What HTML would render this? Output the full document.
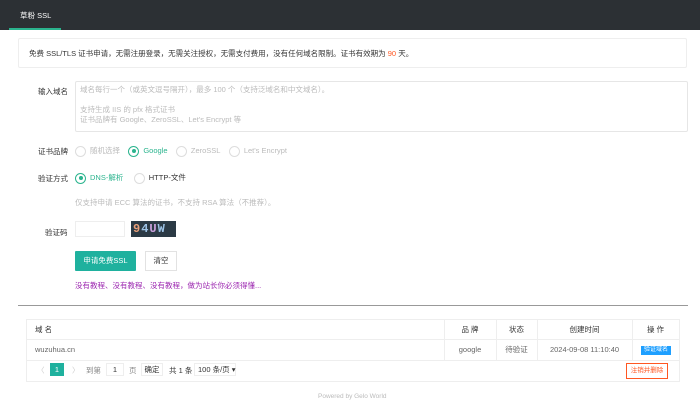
<!DOCTYPE html>
<html><head><meta charset="utf-8"><style>
*{margin:0;padding:0;box-sizing:border-box}
body{width:700px;height:400px;background:#fff;font-family:"Liberation Sans","Noto Sans CJK SC",sans-serif;font-size:7.5px;color:#333;position:relative;overflow:hidden}
.a{position:absolute;white-space:nowrap}
.hd{left:0;top:0;width:700px;height:30px;background:#2c3034}
.rad{display:inline-block;width:11px;height:11px;border:1px solid #ddd;border-radius:50%;vertical-align:middle;margin-right:4px;position:relative}
.rad.on{border-color:#2bb48e}
.rad.on:after{content:"";position:absolute;left:2.5px;top:2.5px;width:4px;height:4px;border-radius:50%;background:#2bb48e}
.g{color:#bbb}
.td{position:absolute;top:0;height:20px;line-height:20px;text-align:center}
</style></head><body>
<div class="a hd"></div>
<div class="a" style="left:20px;top:10px;color:#fff;font-size:7.5px">草粉 SSL</div>
<div class="a" style="left:9px;top:28px;width:52px;height:2px;background:#2bb48e"></div>

<div class="a" style="left:18px;top:38px;width:669px;height:30px;border:1px solid #eee;border-radius:2px;background:#fff"></div>
<div class="a" style="left:29px;top:48px">免费 SSL/TLS 证书申请，无需注册登录，无需关注授权，无需支付费用，没有任何域名限制。证书有效期为 <span style="color:#ff5722">90</span> 天。</div>

<div class="a" style="left:38px;top:86px">输入域名</div>
<div class="a" style="left:75px;top:81px;width:613px;height:51px;border:1px solid #e6e6e6;border-radius:2px"></div>
<div class="a g" style="left:80px;top:85px;line-height:10px">域名每行一个（或英文逗号隔开），最多 100 个（支持泛域名和中文域名）。<br><br>支持生成 IIS 的 pfx 格式证书<br>证书品牌有 Google、ZeroSSL、Let's Encrypt 等</div>

<div class="a" style="left:38px;top:146px">证书品牌</div>
<div class="a" style="left:75px;top:145px;line-height:12px"><span class="rad"></span><span class="g">随机选择</span>&nbsp;&nbsp;&nbsp;&nbsp;<span class="rad on"></span><span style="color:#2bb48e">Google</span>&nbsp;&nbsp;&nbsp;&nbsp;<span class="rad"></span><span class="g">ZeroSSL</span>&nbsp;&nbsp;&nbsp;&nbsp;<span class="rad"></span><span class="g">Let's Encrypt</span></div>

<div class="a" style="left:38px;top:173px">验证方式</div>
<div class="a" style="left:75px;top:172px;line-height:12px"><span class="rad on"></span><span style="color:#2bb48e">DNS-解析</span>&nbsp;&nbsp;&nbsp;&nbsp;&nbsp;<span class="rad"></span>HTTP-文件</div>
<div class="a g" style="left:75px;top:197px">仅支持申请 ECC 算法的证书，不支持 RSA 算法（不推荐）。</div>

<div class="a" style="left:45px;top:227px">验证码</div>
<div class="a" style="left:75px;top:221px;width:50px;height:16px;border:1px solid #eee"></div>
<div class="a" style="left:131px;top:221px;width:45px;height:16px;background:#2b3a45;color:#9dc3e6;font-size:12px;font-weight:bold;line-height:16px;padding-left:2px;letter-spacing:1px;font-family:'Liberation Mono',monospace"><span style="color:#e8a07a">9</span>4<span style="color:#c9a0dc">U</span>W</div>

<div class="a" style="left:75px;top:251px;width:61px;height:20px;background:#1fb19e;color:#fff;line-height:20px;text-align:center;border-radius:1px">申请免费SSL</div>
<div class="a" style="left:145px;top:251px;width:32px;height:20px;border:1px solid #e2e2e2;line-height:18px;text-align:center">清空</div>
<div class="a" style="left:75px;top:280px;color:#9c27b0">没有教程、没有教程、没有教程，做为站长你必须得懂...</div>

<div class="a" style="left:18px;top:305px;width:670px;height:1px;background:#999"></div>

<div class="a" style="left:26px;top:319px;width:654px;height:63px;border:1px solid #eee">
 <div class="a" style="left:0;top:19px;width:652px;height:1px;background:#eee"></div>
 <div class="a" style="left:0;top:40px;width:652px;height:1px;background:#eee"></div>
 <div class="a" style="left:417px;top:0;width:1px;height:40px;background:#eee"></div>
 <div class="a" style="left:469px;top:0;width:1px;height:40px;background:#eee"></div>
 <div class="a" style="left:510px;top:0;width:1px;height:40px;background:#eee"></div>
 <div class="a" style="left:605px;top:0;width:1px;height:40px;background:#eee"></div>
 <div class="td" style="left:8px">域 名</div>
 <div class="td" style="left:417px;width:52px">品 牌</div>
 <div class="td" style="left:469px;width:41px">状态</div>
 <div class="td" style="left:510px;width:95px">创建时间</div>
 <div class="td" style="left:605px;width:47px">操 作</div>
 <div class="td" style="left:8px;top:20px;color:#666">wuzuhua.cn</div>
 <div class="td" style="left:417px;width:52px;top:20px;color:#666">google</div>
 <div class="td" style="left:469px;width:41px;top:20px;color:#666">待验证</div>
 <div class="td" style="left:510px;width:95px;top:20px;color:#666">2024-09-08 11:10:40</div>
 <div class="a" style="left:614px;top:26px;width:30px;height:9px;background:#1e9fff;color:#fff;font-size:6px;line-height:9px;text-align:center">验证域名</div>
 <div class="a" style="left:10px;top:45px;color:#ccc">〈</div>
 <div class="a" style="left:23px;top:43px;width:14px;height:13px;background:#1fb19e;color:#fff;text-align:center;line-height:13px">1</div>
 <div class="a" style="left:45px;top:45px;color:#ccc">〉</div>
 <div class="a" style="left:59px;top:45px;color:#888">到第</div>
 <div class="a" style="left:79px;top:43px;width:18px;height:13px;border:1px solid #eee;text-align:center;line-height:11px">1</div>
 <div class="a" style="left:102px;top:45px;color:#888">页</div>
 <div class="a" style="left:114px;top:43px;width:22px;height:13px;border:1px solid #eee;text-align:center;line-height:11px">确定</div>
 <div class="a" style="left:142px;top:45px">共 1 条</div>
 <div class="a" style="left:167px;top:43px;width:42px;height:13px;border:1px solid #eee;line-height:11px;padding-left:3px">100 条/页 ▾</div>
 <div class="a" style="left:599px;top:43px;width:42px;height:16px;border:1px solid #ff5722;color:#ff5722;font-size:6.5px;text-align:center;line-height:14px">注销并删除</div>
</div>
<div class="a" style="left:318px;top:393px;color:#bbb;font-size:6.5px">Powered by Gelo World</div>
</body></html>
